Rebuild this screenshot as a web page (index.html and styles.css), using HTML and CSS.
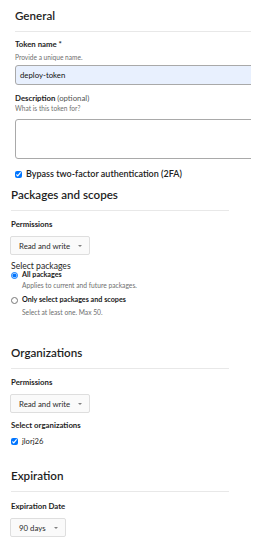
FILE: index.html
```html
<!DOCTYPE html>
<html>
<head>
<meta charset="utf-8">
<link rel="stylesheet" href="styles.css">
</head>
<body>
<div class="page">
  <section class="general">
    <h2 class="title">General</h2>
    <label class="label lbl-first">Token name *</label>
    <div class="help">Provide a unique name.</div>
    <div class="input">deploy-token</div>
    <label class="label lbl-desc">Description <span class="opt">(optional)</span></label>
    <div class="help help-desc">What is this token for?</div>
    <div class="textarea"></div>
    <label class="check-row"><input type="checkbox" checked class="cb"><span>Bypass two-factor authentication (2FA)</span></label>
  </section>

  <section class="sec pkgs">
    <h2 class="title">Packages and scopes</h2>
    <div class="label perm">Permissions</div>
    <div class="dropdown">Read and write <span class="caret"></span></div>
    <div class="sub">Select packages</div>
    <div class="radio-row r1"><input type="radio" name="p" checked class="rd"><span class="rlabel">All packages</span></div>
    <div class="rhelp">Applies to current and future packages.</div>
    <div class="radio-row r2"><input type="radio" name="p" class="rd"><span class="rlabel">Only select packages and scopes</span></div>
    <div class="rhelp rhelp2">Select at least one. Max 50.</div>
  </section>

  <section class="sec orgs">
    <h2 class="title">Organizations</h2>
    <div class="label perm">Permissions</div>
    <div class="dropdown">Read and write <span class="caret"></span></div>
    <div class="label sel">Select organizations</div>
    <label class="org"><input type="checkbox" checked class="cb"><span class="orgname">jlorj26</span></label>
  </section>

  <section class="sec exp">
    <h2 class="title">Expiration</h2>
    <div class="label perm">Expiration Date</div>
    <div class="dropdown">90 days <span class="caret"></span></div>
  </section>
</div>
</body>
</html>
```
FILE: styles.css
```css
* { box-sizing: border-box; }
html, body { margin: 0; padding: 0; background: #fff; }
body {
  font-family: "Lato", "Open Sans", sans-serif;
  color: #1b1b1b;
  width: 269px;
  height: 549px;
  overflow: hidden;
}
.page { display: flex; flex-direction: column; }
.general {
  margin-left: 15px;
  width: 236px;
  overflow: hidden;
  padding-top: 8px;
}
.title {
  margin: 0;
  font-size: 11.6px;
  font-weight: 600;
  line-height: 16px;
  color: #1e1e1e;
  padding-bottom: 7px;
  border-bottom: 1px solid #e8e8e8;
}
.label {
  display: block;
  font-size: 7.8px;
  font-weight: 700;
  line-height: 10px;
  color: #1e1e1e;
}
.lbl-first { margin-top: 7px; }
.lbl-desc { margin-top: 8px; }
.opt { font-weight: 400; color: #555; }
.help {
  font-size: 6.6px;
  line-height: 9px;
  color: #6f6f6f;
  margin-top: 3.5px;
}
.help-desc { margin-top: 0.5px; }
.input {
  margin-top: 3.5px;
  width: calc(100% + 10px);
  height: 20px;
  background: #e8f0fe;
  border: 1px solid #a9a9a9;
  border-radius: 3px;
  font-size: 7.8px;
  line-height: 18px;
  padding-left: 4px;
  color: #111;
}
.textarea {
  margin-top: 6.5px;
  width: calc(100% + 10px);
  height: 40px;
  border: 1px solid #a9a9a9;
  border-radius: 3px;
  background: #fff;
}
.check-row {
  display: flex;
  align-items: center;
  gap: 4px;
  margin-top: 10px;
  font-size: 9px;
  font-weight: 600;
  line-height: 10px;
  color: #222;
}
.cb {
  margin: 0;
  width: 7px;
  height: 7px;
  flex: none;
}
.sec {
  margin-left: 11px;
  width: 218px;
}
.pkgs { margin-top: 8px; }
.perm { margin-top: 8px; }
.dropdown {
  margin-top: 7px;
  margin-left: -1px;
  display: flex;
  width: max-content;
  align-items: center;
  height: 19px;
  padding: 0 7px 0 8px;
  border: 1px solid #dedede;
  border-radius: 2px;
  background: #fafafa;
  font-size: 7.8px;
  color: #2a2a2a;
  gap: 8px;
}
.caret {
  width: 0; height: 0;
  border-left: 2.5px solid transparent;
  border-right: 2.5px solid transparent;
  border-top: 2.5px solid #808080;
  margin-top: 1px;
}
.sub {
  margin-top: 6px;
  font-size: 8.6px;
  line-height: 10px;
  font-weight: 400;
  color: #1e1e1e;
}
.radio-row {
  display: flex;
  align-items: center;
  gap: 4px;
  font-size: 7.2px;
  font-weight: 700;
  line-height: 10px;
}
.r1 { margin-top: -1px; }
.r2 { margin-top: 5.5px; }
.rd { margin: 0; width: 7px; height: 7px; flex: none; }
.rhelp {
  margin-left: 11px;
  font-size: 6.7px;
  line-height: 9px;
  color: #6f6f6f;
  margin-top: 0.5px;
}
.rhelp2 { margin-top: 2.5px; }
.orgs { margin-top: 28.5px; }
.sel { margin-top: 7px; }
.org {
  display: flex;
  align-items: center;
  gap: 4px;
  margin-top: 6px;
  line-height: 10px;
}
.orgname { font-size: 7.6px; color: #222; }
.exp { margin-top: 22px; }
.exp .perm { margin-top: 9px; }
```
